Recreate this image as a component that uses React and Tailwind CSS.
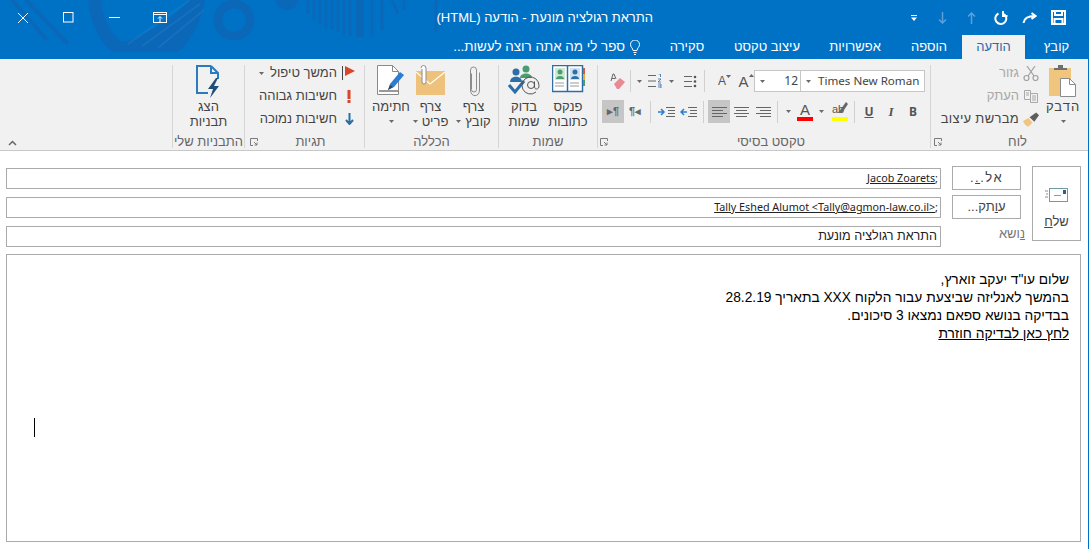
const hebrew = "font-['Liberation_Sans',sans-serif]"

function Caret({ className = '' }) {
  return (
    <svg width="5" height="3" viewBox="0 0 5 3" className={`inline-block shrink-0 ${className}`}>
      <path d="M0 0h5L2.5 3z" fill="#6a6a6a" />
    </svg>
  )
}

function TitleArt() {
  return (
    <svg width="440" height="52" viewBox="0 0 440 52" className="absolute left-0 top-0" fill="none">
      <g stroke="#0b68b8">
        <path d="M12 0 47 40M26 0 68 44" strokeWidth="4" />
        <path d="M88 0C90 24 100 42 112 52H178C192 40 202 20 205 0H189C180 12 150 36 122 42 108 32 102 14 101 0Z" fill="#0b68b8" strokeWidth="0" />
        <path d="M128 44 190 0M142 46 200 4M158 48 204 10" strokeWidth="2" stroke="#3a86c9" opacity=".25" />
        <circle cx="234" cy="20" r="16" strokeWidth="9" />
        <circle cx="287" cy="-2" r="12" fill="#0b68b8" strokeWidth="0" />
        <path d="M308 0v14M314 0v20M320 0v24M326 0v28M332 0v30M338 0v32M344 0v34M350 0v36" strokeWidth="3" />
        <path d="M360 0v37" strokeWidth="8" />
        <path d="M372 0v36M382 0v30M392 0l6 14M404 0v10M436 0v32" strokeWidth="3" />
      </g>
    </svg>
  )
}

function WindowControls() {
  return (
    <div dir="ltr" className="relative flex h-full shrink-0 items-center">
      <div className="flex h-full w-[45px] items-center justify-center">
        <svg width="12" height="12" viewBox="0 0 12 12"><path d="M1 1l10 10M11 1 1 11" stroke="#fff" /></svg>
      </div>
      <div className="flex h-full w-[46px] items-center justify-center">
        <svg width="11" height="11" viewBox="0 0 11 11"><rect x=".5" y=".5" width="9.5" height="9.5" fill="none" stroke="#fff" /></svg>
      </div>
      <div className="flex h-full w-[46px] items-center justify-center">
        <svg width="11" height="3" viewBox="0 0 11 3"><path d="M0 1.5h11" stroke="#fff" /></svg>
      </div>
      <div className="flex h-full w-[46px] items-center justify-center">
        <svg width="14" height="12" viewBox="0 0 14 12" fill="none" stroke="#fff">
          <rect x=".5" y=".5" width="13" height="10" />
          <path d="M0 2.5h14M7 10V5M5 6.500l2-2 2 2" />
        </svg>
      </div>
    </div>
  )
}

function QuickAccess() {
  return (
    <div className="relative flex h-full w-[435px] shrink-0 items-center">
      <div className="mr-[15px] flex w-[29px] justify-center">
        <svg width="15" height="15" viewBox="0 0 15 15" fill="none" stroke="#fff" strokeWidth="2">
          <path d="M1 1h13v13H1zM4 1v4h7V1M3.500 14V9h8v5" />
        </svg>
      </div>
      <div className="flex w-[29px] justify-center">
        <svg width="15" height="12" viewBox="0 0 15 12" fill="none" stroke="#fff" strokeWidth="2">
          <path d="M1.500 11C2 6 6 4 13 4M9.500 1l4 3-4 3" />
        </svg>
      </div>
      <div className="flex w-[29px] justify-center">
        <svg width="14" height="14" viewBox="0 0 14 14" fill="none" stroke="#fff" strokeWidth="2">
          <path d="M4.500 2.500A5.500 5.500 0 1 0 10 3M9 0v5h4.500" />
        </svg>
      </div>
      <div className="flex w-[29px] justify-center">
        <svg width="9" height="12" viewBox="0 0 9 12" fill="none" stroke="#5d9fd8" strokeWidth="1.500"><path d="M4.500 12V1M1 4.500l3.500-3.500L8 4.500" /></svg>
      </div>
      <div className="flex w-[29px] justify-center">
        <svg width="9" height="12" viewBox="0 0 9 12" fill="none" stroke="#5d9fd8" strokeWidth="1.500"><path d="M4.500 0v11M1 7.500 4.500 11 8 7.500" /></svg>
      </div>
      <div className="flex w-[28px] justify-center">
        <svg width="6" height="6" viewBox="0 0 6 6"><path d="M0 .5h6" stroke="#fff" /><path d="M0 2.500h6L3 6z" fill="#fff" /></svg>
      </div>
    </div>
  )
}

function Tab({ w, active, children }) {
  return (
    <div className={`flex h-full shrink-0 items-center justify-center text-[13px] ${w} ${active ? 'bg-[#f1f1f1] text-[#2f6aa8]' : 'text-white'}`}>
      {children}
    </div>
  )
}

function TitleBar() {
  return (
    <div className={`relative h-[59px] shrink-0 bg-[#0072c6] ${hebrew}`}>
      <TitleArt />
      <div className="relative flex h-[35px] items-center">
        <QuickAccess />
        <div className="text-[13px] text-white">התראת רגולציה מונעת - הודעה (HTML)</div>
        <div className="mr-auto h-full"><WindowControls /></div>
      </div>
      <div className="relative flex h-[24px] items-stretch">
        <Tab w="w-[63px]">קובץ</Tab>
        <Tab w="w-[63px]" active>הודעה</Tab>
        <Tab w="w-[66px]">הוספה</Tab>
        <Tab w="w-[82px]">אפשרויות</Tab>
        <Tab w="w-[94px]">עיצוב טקסט</Tab>
        <Tab w="w-[66px]">סקירה</Tab>
        <div className="mr-[14px] flex items-center gap-[5px] text-[13.4px] text-white">
          <svg width="10" height="15" viewBox="0 0 10 15" fill="none" stroke="#fff">
            <path d="M3 10.500C3 8 .5 7.500.5 4.500a4.500 4.500 0 0 1 9 0C9.500 7.500 7 8 7 10.500zM3.500 12.500h3M4 14.500h2" />
          </svg>
          <span>ספר לי מה אתה רוצה לעשות...</span>
        </div>
      </div>
    </div>
  )
}

function Launcher({ className }) {
  return (
    <svg width="8" height="8" viewBox="0 0 8 8" fill="none" stroke="#7a7a7a" className={`absolute bottom-[2px] ${className}`}>
      <path d="M7.500 3V.5H.5v7H3M4 4l3 3M7 4.500V7H4.500" />
    </svg>
  )
}

function Group({ w, label, launcher, labelClass = '', children }) {
  return (
    <div className={`relative flex h-full shrink-0 flex-col border-l border-[#d6d6d6] ${w}`}>
      <div className="flex min-h-0 flex-1">{children}</div>
      <div className={`h-[14px] whitespace-nowrap text-center text-[13px] leading-[16px] text-[#666] ${labelClass}`}>{label}</div>
      {launcher}
    </div>
  )
}

function BigButton({ w = 'w-[44px]', icon, lines, caret }) {
  return (
    <div className={`flex shrink-0 flex-col items-center text-[13px] leading-[15px] text-[#444] ${w}`}>
      <div className="flex h-[34px] items-start justify-center">{icon}</div>
      {lines.map((line, i) => (
        <div key={i} className="flex items-center gap-[4px] whitespace-nowrap">
          <span>{line}</span>
          {caret === 'inline' && i === lines.length - 1 && <Caret />}
        </div>
      ))}
      {caret === 'below' && <Caret className="mt-[6px]" />}
    </div>
  )
}

function SmallRow({ icon, text, gray, caret, textClass = '' }) {
  return (
    <div className={`flex h-[16px] items-center gap-[4px] whitespace-nowrap text-[13px] ${gray ? 'text-[#a8a8a8]' : 'text-[#444]'}`}>
      <div className="flex w-[16px] shrink-0 justify-center">{icon}</div>
      <span className={textClass}>{text}</span>
      {caret && <Caret className="mr-[2px]" />}
    </div>
  )
}

function Cell({ w, on, children }) {
  return (
    <div className={`flex h-full shrink-0 items-center justify-center ${w} ${on ? 'bg-[#c6c6c6]' : ''}`}>
      {children}
    </div>
  )
}

function Sep({ className }) {
  return <div className={`h-[22px] w-px shrink-0 self-center bg-[#d0d0d0] ${className}`} />
}

function AlignLines({ paths }) {
  return (
    <svg width="15" height="12" viewBox="0 0 15 12" fill="none" stroke="#666">
      <path d={paths} />
    </svg>
  )
}

function PasteIcon() {
  return (
    <svg width="28" height="33" viewBox="0 0 28 33">
      <rect x="0" y="3" width="22" height="28" fill="#f0c67f" />
      <path d="M5 5V3h4V0h5v3h4v2z" fill="#6f6f6f" />
      <path d="M11.500 13.500h9l6 6v12h-15z" fill="#fff" stroke="#8a8a8a" />
      <path d="M20.500 13.500v6h6" fill="none" stroke="#8a8a8a" />
    </svg>
  )
}

function ClipIcon() {
  return (
    <svg width="12" height="32" viewBox="0 0 12 32" fill="none" stroke="#8c8c8c">
      <path d="M3.500 8v16a2.500 2.500 0 0 0 5 0V4.500a3 3 0 0 0-6 0v20c0 7.500 9 7.500 9 0V7" transform="translate(0 0.500)" />
    </svg>
  )
}

function AttachItemIcon() {
  return (
    <svg width="29" height="31" viewBox="0 0 29 31" fill="none">
      <rect x="0" y="6" width="29" height="24" fill="#efc27c" />
      <path d="M0 7l14 12L29 7" stroke="#fff" strokeWidth="1.200" />
      <path d="M5 4v13a2 2 0 0 0 4 0V3a2 2 0 0 0-5 0" fill="#fff" stroke="#8c8c8c" transform="translate(1 0)" />
    </svg>
  )
}

function SignatureIcon() {
  return (
    <svg width="28" height="31" viewBox="0 0 28 31" fill="none">
      <path d="M.5.5h15l6 6v23H.5z" fill="#fff" stroke="#8a8a8a" />
      <path d="M15.500.5v6h6" stroke="#8a8a8a" />
      <path d="M2 26h19" stroke="#333" />
      <path d="M11 25l2-6L23 7l4 3-10 12z" fill="#2b7cd3" />
      <path d="M11 25l2-5 3 2z" fill="#444" />
    </svg>
  )
}

function AddressBookIcon() {
  return (
    <svg width="33" height="29" viewBox="0 0 33 29" fill="none">
      <rect x=".5" y=".5" width="30" height="26" fill="#fff" stroke="#2c6ea6" strokeWidth="1.500" />
      <path d="M15.500 1v26" stroke="#2c6ea6" strokeWidth="1.500" />
      <rect x="3" y="3" width="10" height="12" fill="#cfe8d2" />
      <rect x="18" y="3" width="10" height="12" fill="#cfe0f2" />
      <circle cx="8" cy="7" r="2.500" fill="#4a9d6f" />
      <path d="M4 14c0-4 8-4 8 0z" fill="#4a9d6f" />
      <circle cx="23" cy="7" r="2.500" fill="#2c6ea6" />
      <path d="M19 14c0-4 8-4 8 0z" fill="#2c6ea6" />
      <path d="M3 18h9M3 21h9M18 18h9M18 21h9" stroke="#9a9a9a" />
      <path d="M32 3v6" stroke="#d9534f" strokeWidth="2" />
      <path d="M32 9v6" stroke="#e7a93a" strokeWidth="2" />
      <path d="M32 15v6" stroke="#4a9d6f" strokeWidth="2" />
    </svg>
  )
}

function CheckNamesIcon() {
  return (
    <svg width="32" height="30" viewBox="0 0 32 30" fill="none">
      <circle cx="8" cy="7" r="3.500" fill="#2c6ea6" />
      <path d="M2 17c0-7 12-7 12 0z" fill="#2c6ea6" />
      <circle cx="18" cy="4" r="3.500" fill="#4a9d6f" />
      <path d="M12 13c0-6 12-6 12 0z" fill="#4a9d6f" />
      <path d="M1 20l6 7L16 16" stroke="#2c6ea6" strokeWidth="3" />
      <path d="M28 27a8.500 8.500 0 1 1 3-6.500c0 2.500-1 3.500-2.500 3.500S26.500 23 26.500 21v-4.500M26.500 20a3.500 3.500 0 1 1-7 0 3.500 3.500 0 0 1 7 0z" stroke="#555" />
    </svg>
  )
}

function TemplatesIcon() {
  return (
    <svg width="25" height="33" viewBox="0 0 25 33" fill="none">
      <path d="M15 1H1v27h11M15 1l7 7v6M15 1v7h7" stroke="#2c7bc0" strokeWidth="2" />
      <path d="M20 13l-8 11h5l-3 9 9-12h-5l4-8z" fill="#1e4e79" />
    </svg>
  )
}

function FontSizeGlyph({ up, size }) {
  return (
    <span className="relative flex items-end">
      <span className={`leading-none text-[#555] ${size}`}>A</span>
      <svg width="5" height="3" viewBox="0 0 5 3" className="absolute -right-[5px] top-0">
        <path d={up ? 'M0 3h5L2.500 0z' : 'M0 0h5L2.500 3z'} fill="#666" />
      </svg>
    </span>
  )
}

function Ribbon() {
  return (
    <div className={`flex h-[92px] shrink-0 border-b border-[#c8c8c8] bg-[#f1f1f1] pb-[2px] pt-[6px] ${hebrew}`}>
      <Group w="w-[158px]" label="לוח" labelClass="pl-[16px]" launcher={<Launcher className="left-[3px]" />}>
        <div className="mr-[5px]">
          <BigButton w="w-[40px]" icon={<PasteIcon />} lines={[<span className="tracking-[1px]">הדבק</span>]} caret="below" />
        </div>
        <div className="mr-[4px] flex flex-col gap-[7px]">
          <SmallRow gray text="גזור" icon={
            <svg width="16" height="15" viewBox="0 0 16 15" fill="none" stroke="#a0a0a0" strokeWidth="1.200">
              <circle cx="3.500" cy="12" r="2.500" /><circle cx="12.500" cy="12" r="2.500" />
              <path d="M5 10 12 0M11 10 4 0" />
            </svg>
          } />
          <SmallRow gray text="העתק" icon={
            <svg width="14" height="13" viewBox="0 0 14 13" fill="none" stroke="#a8a8a8">
              <path d="M.5.500h6v9h-6zM6.500 3.500h7v9h-7zM8 6h4M8 8h4M8 10h4M2 3h3M2 5h3" />
            </svg>
          } />
          <SmallRow text="מברשת עיצוב" textClass="tracking-[.3px]" icon={
            <svg width="17" height="15" viewBox="0 0 17 15">
              <path d="M0 9l6-3 4 5-4 4C4 15 1 12 0 9z" fill="#f0c67f" />
              <path d="M7 5l7-5 3 3-5 7z" fill="#5d5d5d" />
            </svg>
          } />
        </div>
      </Group>

      <Group w="w-[333px]" label="טקסט בסיסי" labelClass="translate-x-[7px]" launcher={<Launcher className="left-[2px]" />}>
        <div className="flex flex-col gap-[8px] pt-[5px]">
          <div className="flex h-[22px] items-center pr-[5px]">
            <div dir="ltr" className="flex h-full w-[125px] shrink-0 items-center border border-[#c6c6c6] bg-white pl-[5px] font-['Noto_Sans',sans-serif] text-[11.6px] text-[#444]">
              <Caret className="mr-[7px]" />Times New Roman
            </div>
            <div dir="ltr" className="flex h-full w-[46px] shrink-0 items-center justify-between border border-r-0 border-[#c6c6c6] bg-white pl-[5px] pr-[2px] font-['Noto_Sans',sans-serif] text-[12px] text-[#444]">
              <Caret />12
            </div>
            <Cell w="w-[21px]"><FontSizeGlyph up size="text-[15px]" /></Cell>
            <Cell w="w-[22px]"><FontSizeGlyph size="text-[12px]" /></Cell>
            <Sep className="mr-[6px]" />
            <Cell w="w-[28px]">
              <svg width="13" height="13" viewBox="0 0 13 13" fill="none">
                <path d="M0 1.500h8M0 6.500h8M0 11.500h8" stroke="#666" />
                <circle cx="11" cy="2" r="1.300" fill="#555" /><circle cx="11" cy="6.500" r="1.300" fill="#555" /><circle cx="11" cy="11" r="1.300" fill="#555" />
              </svg>
            </Cell>
            <Cell w="w-[10px]"><Caret /></Cell>
            <Cell w="w-[22px]">
              <svg width="14" height="14" viewBox="0 0 14 14" fill="none">
                <path d="M0 1.500h8M0 7h8M0 12.500h8" stroke="#666" />
                <path d="M10.500 0h2v3M10 5h3l-3 3h3M10 10h3v4h-3M10 12h3" stroke="#3a6ea5" strokeWidth=".8" />
              </svg>
            </Cell>
            <Cell w="w-[10px]"><Caret /></Cell>
            <Sep className="mr-[3px]" />
            <Cell w="w-[26px]">
              <svg width="17" height="17" viewBox="0 0 17 17">
                <path d="M5 11l6-6 5 4-6 7H8z" fill="#e88a93" />
                <path d="M2 8l2-7h1l2 5M3 5.500h3" fill="none" stroke="#666" />
              </svg>
            </Cell>
          </div>

          <div className="flex h-[23px] items-center pr-[6px]">
            <Cell w="w-[22px]"><b className="font-['Noto_Sans',sans-serif] text-[12px] text-[#555]">B</b></Cell>
            <Cell w="w-[22px]"><i className="font-['Liberation_Serif',serif] text-[13px] font-bold text-[#555]">I</i></Cell>
            <Cell w="w-[22px]"><u className="font-['Noto_Sans',sans-serif] text-[12px] font-bold text-[#555]">U</u></Cell>
            <Sep className="mr-[3px]" />
            <Cell w="w-[28px]">
              <span className="relative flex flex-col items-center">
                <span dir="ltr" className="h-[12px] w-[16px] text-left text-[11px] leading-[12px] text-[#555]">ab</span>
                <svg width="10" height="12" viewBox="0 0 10 12" className="absolute -top-[1px] right-0"><path d="M0 11 8 0l2 2-6 9z" fill="#666" /></svg>
                <span className="mt-[2px] h-[4px] w-[16px] bg-[#ffff00]" />
              </span>
            </Cell>
            <Cell w="w-[10px]"><Caret /></Cell>
            <Cell w="w-[22px]">
              <span className="flex flex-col items-center">
                <span className="h-[13px] text-[15px] leading-[13px] text-[#555]">A</span>
                <span className="mt-[1px] h-[4px] w-[16px] bg-[#ff0000]" />
              </span>
            </Cell>
            <Cell w="w-[12px]"><Caret /></Cell>
            <Sep className="ml-[3px] mr-[4px]" />
            <Cell w="w-[22px]"><AlignLines paths="M0 1.500h15M4 4.500h11M0 7.500h15M4 10.500h11" /></Cell>
            <Cell w="w-[22px]"><AlignLines paths="M0 1.500h15M2 4.500h11M0 7.500h15M2 10.500h11" /></Cell>
            <Cell w="w-[22px]" on><AlignLines paths="M0 1.500h15M0 4.500h11M0 7.500h15M0 10.500h11" /></Cell>
            <Sep className="mx-[4px]" />
            <Cell w="w-[22px]">
              <svg width="17" height="12" viewBox="0 0 17 12" fill="none">
                <path d="M8 1.500h9M10 4.500h7M10 7.500h7M8 10.500h9" stroke="#666" />
                <path d="M7 6H1M4 3 1 6l3 3" stroke="#2b7cd3" strokeWidth="1.500" />
              </svg>
            </Cell>
            <Cell w="w-[22px]">
              <svg width="17" height="12" viewBox="0 0 17 12" fill="none">
                <path d="M8 1.500h9M10 4.500h7M10 7.500h7M8 10.500h9" stroke="#666" />
                <path d="M0 6h6M3 3l3 3-3 3" stroke="#2b7cd3" strokeWidth="1.500" />
              </svg>
            </Cell>
            <Sep className="mx-[4px]" />
            <Cell w="w-[22px]"><span dir="ltr" className="text-[11px] font-bold text-[#666]">¶◂</span></Cell>
            <Cell w="w-[22px]" on><span dir="ltr" className="text-[11px] font-bold text-[#666]">▸¶</span></Cell>
          </div>
        </div>
      </Group>

      <Group w="w-[99px]" label="שמות">
        <div className="flex pr-[7px]">
          <BigButton icon={<AddressBookIcon />} lines={['פנקס', 'כתובות']} />
          <BigButton icon={<CheckNamesIcon />} lines={['בדוק', 'שמות']} />
        </div>
      </Group>

      <Group w="w-[134px]" label="הכללה">
        <div className="flex pr-[3px]">
          <BigButton w="w-[43px]" icon={<ClipIcon />} lines={['צרף', 'קובץ']} caret="inline" />
          <BigButton w="w-[43px]" icon={<AttachItemIcon />} lines={['צרף', 'פריט']} caret="inline" />
          <div className="-mr-[3px]">
            <BigButton w="w-[42px]" icon={<SignatureIcon />} lines={['חתימה']} caret="below" />
          </div>
        </div>
      </Group>

      <Group w="w-[120px]" label="תגיות" labelClass="translate-x-[6px]" launcher={<Launcher className="left-[5px]" />}>
        <div className="flex flex-col gap-[7px] pr-[7px]">
          <SmallRow text="המשך טיפול" caret icon={
            <svg width="14" height="14" viewBox="0 0 14 14"><path d="M.5 0v14" stroke="#444" /><path d="M3 0l10 5-10 5z" fill="#d9472b" /></svg>
          } />
          <SmallRow text="חשיבות גבוהה" icon={
            <svg width="4" height="13" viewBox="0 0 4 13"><path d="M.5 0h3v9h-3zM.5 10h3v3h-3z" fill="#d9472b" /></svg>
          } />
          <SmallRow text="חשיבות נמוכה" icon={
            <svg width="9" height="12" viewBox="0 0 9 12" fill="none" stroke="#2c6ea6" strokeWidth="2"><path d="M4.500 0v10M1 7l3.500 4L8 7" /></svg>
          } />
        </div>
      </Group>

      <Group w="w-[72px]" label="התבניות שלי">
        <div className="flex w-full justify-center">
          <BigButton icon={<TemplatesIcon />} lines={['הצג', 'תבניות']} />
        </div>
      </Group>

      <div className="flex flex-1 items-end justify-end pb-[2px] pl-[8px]">
        <svg width="9" height="6" viewBox="0 0 9 6" fill="none" stroke="#666" strokeWidth="1.500"><path d="M1 5l3.500-3.500L8 5" /></svg>
      </div>
    </div>
  )
}

function RecipientRow({ label, children }) {
  return (
    <div className="flex h-[24px] items-center gap-[11px]">
      <div className="flex h-full w-[69px] shrink-0 items-center justify-center border border-[#ababab] text-[13px] text-[#444]">
        {label}
      </div>
      <div className="flex h-[21px] flex-1 items-center border border-[#ababab] pr-[2px] font-['Noto_Sans',sans-serif] text-[10.75px] text-[#222]">
        {children}
      </div>
    </div>
  )
}

function Compose() {
  return (
    <div className={`flex min-h-0 flex-1 flex-col bg-white pl-[6px] pr-[7px] pt-[15px] ${hebrew}`}>
      <div className="flex gap-[11px]">
        <div className="flex h-[75px] w-[49px] shrink-0 flex-col items-center border border-[#ababab] pt-[21px] text-[13px] text-[#444]">
          <svg width="23" height="14" viewBox="0 0 23 14" fill="none">
            <rect x="4.500" y=".5" width="18" height="13" stroke="#6e9aa5" />
            <path d="M9 7.500h7" stroke="#9a9a9a" />
            <rect x="18" y="2" width="3" height="4" fill="#33607c" />
            <path d="M0 3h3M1 6h2M0 9h3" stroke="#8a8a8a" />
          </svg>
          <div className="mt-[10px]">של<u>ח</u></div>
        </div>
        <div className="flex flex-1 flex-col gap-[5px]">
          <RecipientRow label={<span className="tracking-[1.5px]">אל<span>.<u>.</u>.</span></span>}>
            <span dir="ltr"><u>Jacob Zoarets</u>;</span>
          </RecipientRow>
          <RecipientRow label={<span>ע<u>ו</u>תק...</span>}>
            <span dir="ltr"><u>Tally Eshed Alumot &lt;Tally@agmon-law.co.il&gt;</u>;</span>
          </RecipientRow>
          <div className="flex h-[24px] items-center gap-[11px]">
            <div className="-mr-[4px] ml-[4px] w-[69px] shrink-0 pb-[4px] text-[13px] text-[#777]"><u>נ</u>ושא</div>
            <div className="flex h-[21px] flex-1 items-center border border-[#ababab] pr-[3px] text-[12.6px] text-[#222]">
              התראת רגולציה מונעת
            </div>
          </div>
        </div>
      </div>
      <div className="relative mt-[6px] h-[288px] border border-[#ababab] pr-[11px] pt-[16px] text-[13.75px] leading-[18px] text-black">
        <div>שלום עו"ד יעקב זוארץ,</div>
        <div>בהמשך לאנליזה שביצעת עבור הלקוח XXX בתאריך 28.2.19</div>
        <div>בבדיקה בנושא ספאם נמצאו 3 סיכונים.</div>
        <div><u>לחץ כאן לבדיקה חוזרת</u></div>
        <div className="absolute left-[27px] top-[163px] h-[19px] w-px bg-black" />
      </div>
    </div>
  )
}

export default function App() {
  return (
    <div dir="rtl" className="flex h-[549px] w-[1089px] flex-col overflow-hidden border-r border-[#0072c6]">
      <TitleBar />
      <Ribbon />
      <Compose />
    </div>
  )
}
